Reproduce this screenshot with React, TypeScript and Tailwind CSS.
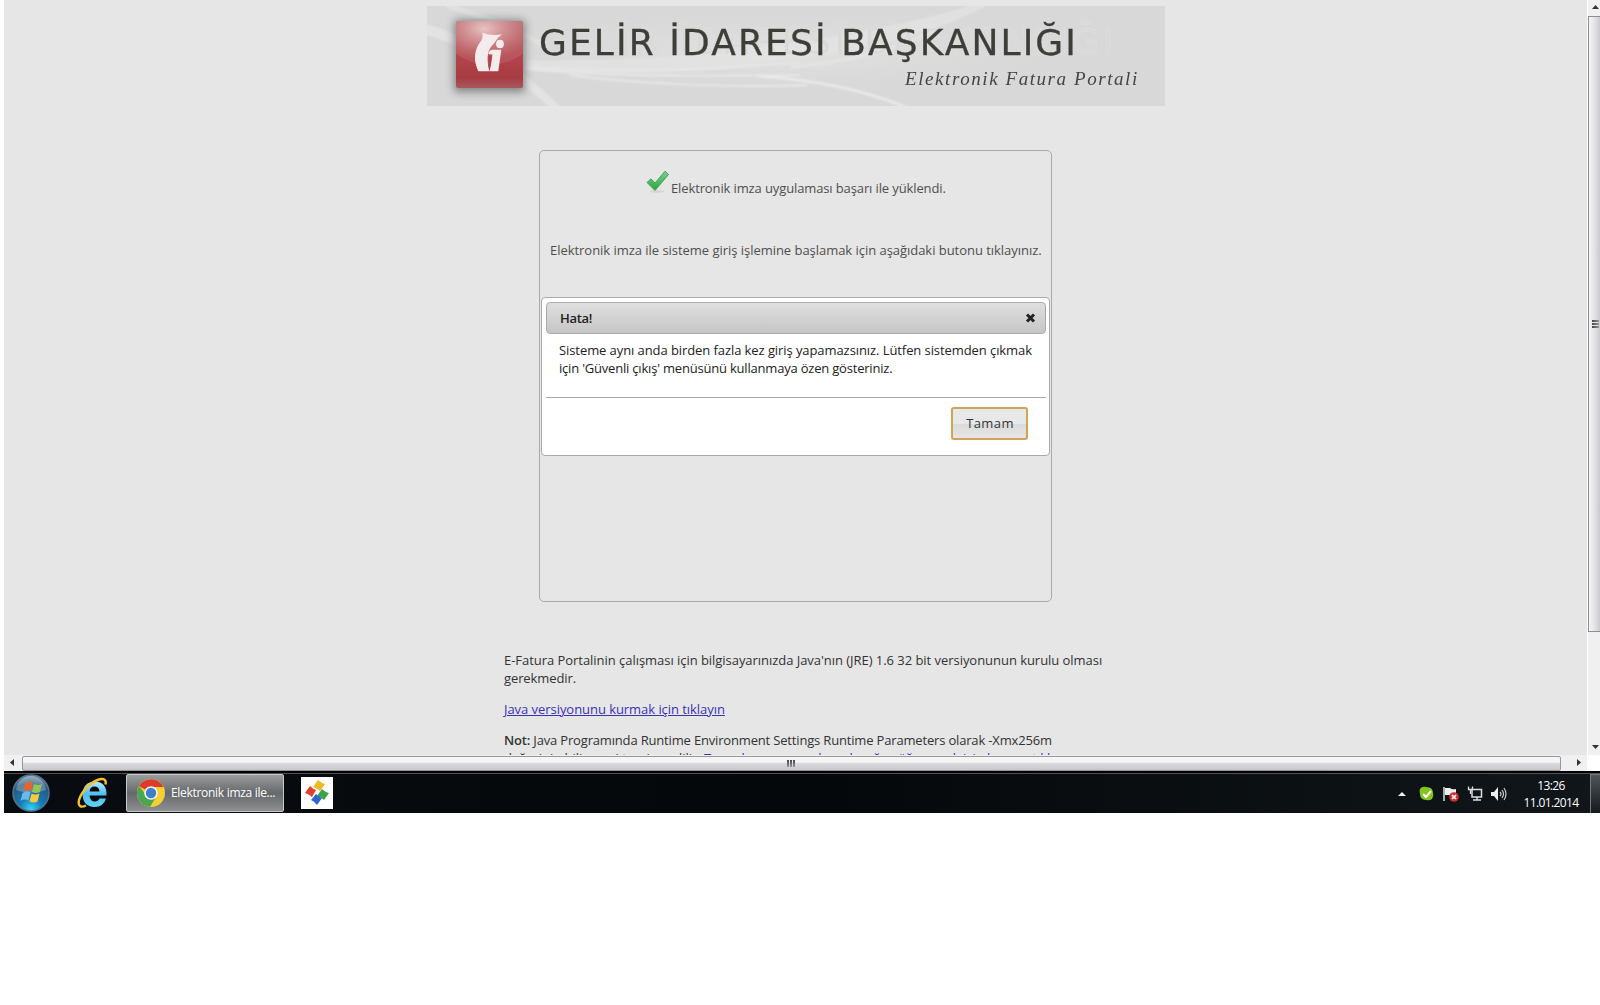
import type { ReactNode } from "react";

const sans = "font-['Open_Sans','Noto_Sans',sans-serif]";

function Banner() {
  return (
    <header className="relative h-[100px] w-[738px] shrink-0 overflow-hidden bg-[#d8d8d8]">
      <svg className="absolute inset-0" width="738" height="100" viewBox="0 0 738 100" fill="none">
        <defs>
          <radialGradient id="glow" cx="0.48" cy="0.45" r="0.5">
            <stop offset="0" stopColor="#e2e2e2" />
            <stop offset="1" stopColor="#d8d8d8" stopOpacity="0" />
          </radialGradient>
          <linearGradient id="red" x1="0" y1="0" x2="0" y2="1">
            <stop offset="0" stopColor="#b5676b" />
            <stop offset="0.55" stopColor="#b2434a" />
            <stop offset="0.85" stopColor="#a83c43" />
            <stop offset="1" stopColor="#a65a5e" />
          </linearGradient>
          <radialGradient id="shine" cx="0.42" cy="0.18" r="0.7">
            <stop offset="0" stopColor="#f2d6d7" stopOpacity="0.85" />
            <stop offset="1" stopColor="#cf8487" stopOpacity="0.25" />
          </radialGradient>
          <filter id="soft" x="-30%" y="-30%" width="160%" height="160%">
            <feGaussianBlur stdDeviation="4" />
          </filter>
          <filter id="wave" x="-5%" y="-20%" width="110%" height="140%">
            <feGaussianBlur stdDeviation="1.1" />
          </filter>
        </defs>
        <rect width="738" height="100" fill="url(#glow)" />
        <g filter="url(#wave)">
          <path d="M-4 17C45 30 95 62 134 101h-12C85 66 40 40-4 28Z" fill="#e3e3e3" />
          <path d="M100 60C220 72 350 62 470 34C510 24 545 8 562-2H548C480 20 300 58 100 54Z" fill="#e4e4e4" opacity="0.7" />
          <path d="M100 61C180 68 270 66 373 56M100 63C190 71 280 70 373 69" stroke="#e8e8e8" strokeWidth="2" />
          <path d="M143 69C200 77 300 82 380 79" stroke="#e8e8e8" strokeWidth="2" />
          <path d="M330 70C390 74 440 85 478 101" stroke="#ebebeb" strokeWidth="2.500" />
          <path d="M363 61C430 55 470 42 510 24" stroke="#e3e3e3" strokeWidth="4" />
          <path d="M20 0C60 12 90 22 120 42" stroke="#e0e0e0" strokeWidth="5" />
        </g>
        <rect x="27" y="14" width="71" height="72" rx="3" fill="#555" opacity="0.65" filter="url(#soft)" />
        <rect x="29" y="15" width="67" height="67" rx="2" fill="url(#red)" />
        <path d="M29 17q0-2 2-2h63q2 0 2 2v31q-34 22-67 0Z" fill="url(#shine)" />
        <path
          d="M55.300 26.700Q65 30 75 28.300Q71 31 68 36Q63 41 61.300 46Q59.500 55 62.300 65.300H51.300Q47.500 57 48 50.500Q48.500 43 52.300 37.300Q57 32 55.300 26.700Z"
          fill="#f4ecec"
        />
        <path d="M61 47.500Q62.500 44 66 43.700H74.300L71.300 65.300H62.500Q64.500 58 65.500 48.500Q63 48.500 61 47.500Z" fill="#f4ecec" />
        <path d="M61.700 49.500H64.800L63 62Q61 55 61.700 49.500Z" fill="#ad4249" />
        <ellipse cx="73" cy="38" rx="3.900" ry="4.300" fill="#f4ecec" />
      </svg>
      <div
        aria-hidden="true"
        className="absolute left-[112px] top-[15px] whitespace-nowrap font-['DejaVu_Sans',sans-serif] text-[36px] leading-[42px] tracking-[3.75px] text-[#d9d9d9] [-webkit-text-stroke:0.6px_#dfdfdf]"
      >
        GELİR İDARESİ BAŞKANLIĞI
      </div>
      <h1 className="absolute left-[112px] top-[16px] whitespace-nowrap font-['DejaVu_Sans',sans-serif] text-[36px] leading-[42px] tracking-[2.1px] text-[#3c3e37] [-webkit-text-stroke:0.3px_#3c3e37]">
        GELİR İDARESİ BAŞKANLIĞI
      </h1>
      <div className="absolute left-[478px] top-[61px] whitespace-nowrap font-['Liberation_Serif',serif] text-[19px] italic leading-6 tracking-[1.57px] text-[#444]">
        Elektronik Fatura Portali
      </div>
    </header>
  );
}

function CheckMark() {
  return (
    <svg className="shrink-0" width="24" height="24" viewBox="0 0 24 24">
      <defs>
        <linearGradient id="green" x1="0" y1="0" x2="0" y2="1">
          <stop offset="0" stopColor="#7fcf8b" />
          <stop offset="1" stopColor="#27a63c" />
        </linearGradient>
      </defs>
      <ellipse cx="11" cy="21.5" rx="7" ry="1.3" fill="#d4d4d4" />
      <path d="M1 12.500 5 8.800l4 4.200L19 1.200l3.500 3.300L9 20.500Z" fill="url(#green)" stroke="#45a556" strokeWidth="1" strokeLinejoin="round" />
    </svg>
  );
}

function ErrorDialog() {
  return (
    <div className="absolute left-px top-[146px] flex h-[159px] w-[509px] flex-col rounded-[4px] border border-[#aaa] bg-white py-1 pl-1 pr-[3px] text-[#222]">
      <div className="flex h-8 shrink-0 items-center justify-between rounded-[4px] border border-[#aaa] bg-linear-to-b from-[#dfdfdf] to-[#c6c6c6] pl-[13px] pr-[9px]">
        <span className="text-[13px] font-semibold tracking-[-0.3px]">Hata!</span>
        <svg width="11" height="10" viewBox="0 0 11 10">
          <path d="M2 1.500 9 8.500M9 1.500 2 8.500" stroke="#222" strokeWidth="3" />
        </svg>
      </div>
      <div className="h-[63px] shrink-0 whitespace-nowrap pl-[13px] pt-[7px] text-[13px] leading-[18px]">
        <p className="tracking-[-0.08px]">Sisteme aynı anda birden fazla kez giriş yapamazsınız. Lütfen sistemden çıkmak</p>
        <p className="tracking-[-0.2px]">için 'Güvenli çıkış' menüsünü kullanmaya özen gösteriniz.</p>
      </div>
      <div className="flex justify-end border-t border-[#aaa] pr-[18px] pt-[9px]">
        <button className="h-[33px] w-[77px] rounded-[3px] border-2 border-[#cda65c] bg-linear-to-b from-[#e8e8e8] from-50% via-[#dadada] via-50% to-[#e6e6e6] pb-px pl-px text-[13px] leading-[18px] tracking-[0.4px] text-[#333] shadow-[0_0_1px_0_#efd69a]">
          Tamam
        </button>
      </div>
    </div>
  );
}

function LoginPanel() {
  return (
    <section className="relative mt-[44px] h-[452px] w-[513px] shrink-0 rounded-[5px] border border-[#aaa] text-[13px] leading-[18px] text-[#4f4f4f]">
      <div className="flex pl-[106px] pt-[19px]">
        <CheckMark />
        <p className="ml-px mt-[9px] whitespace-nowrap tracking-[-0.12px]">Elektronik imza uygulaması başarı ile yüklendi.</p>
      </div>
      <p className="mt-[44px] whitespace-nowrap pl-[10px] tracking-[-0.035px]">
        Elektronik imza ile sisteme giriş işlemine başlamak için aşağıdaki butonu tıklayınız.
      </p>
      <ErrorDialog />
    </section>
  );
}

function Notes() {
  return (
    <div className="mt-[49px] w-[620px] shrink-0 whitespace-nowrap text-[13px] leading-[18px] text-[#333]">
      <p className="tracking-[-0.04px]">E-Fatura Portalinin çalışması için bilgisayarınızda Java'nın (JRE) 1.6 32 bit versiyonunun kurulu olması</p>
      <p className="tracking-[-0.1px]">gerekmedir.</p>
      <p className="mt-[13px] tracking-[-0.05px] text-[#3a32b4] underline">Java versiyonunu kurmak için tıklayın</p>
      <p className="mt-[13px] tracking-[-0.17px]">
        <span className="font-semibold">Not:</span> Java Programında Runtime Environment Settings Runtime Parameters olarak -Xmx256m
      </p>
      <p className="tracking-[-0.03px]">
        değerinin bilinmesi tavsiye edilir. <span className="text-[#3a32b4] underline">Tanımlamanın nasıl yapılacağını öğrenmek için buraya tıkla</span>
      </p>
    </div>
  );
}

function Arrow({ d }: { d: string }) {
  return (
    <svg width="8" height="8" viewBox="0 0 8 8" fill="#333">
      <path d={d} />
    </svg>
  );
}

function VerticalScroll() {
  return (
    <div className="flex h-[755px] w-[13px] shrink-0 flex-col border-l border-white bg-[#f0f0f0]">
      <div className="flex h-4 shrink-0 items-center pl-1">
        <Arrow d="M0 5h7L3.500 1Z" />
      </div>
      <div className="flex h-[616px] shrink-0 items-center border-y border-l border-[#8f8f8f] bg-linear-to-r from-[#f4f4f4] via-[#e3e3e6] to-[#c9c9ce] pl-[3px]">
        <div className="flex w-[7px] flex-col gap-[1px]">
          <div className="h-[2px] bg-linear-to-r from-[#444] to-[#999]" />
          <div className="h-[2px] bg-linear-to-r from-[#444] to-[#999]" />
          <div className="h-[2px] bg-linear-to-r from-[#444] to-[#999]" />
        </div>
      </div>
      <div className="flex grow items-end pb-1 pl-1">
        <Arrow d="M0 2h7L3.500 6Z" />
      </div>
    </div>
  );
}

function HorizontalScroll() {
  return (
    <div className="flex h-4 w-[1583px] items-center bg-[#f0f0f0]">
      <div className="flex w-[18px] shrink-0 justify-center pr-[2px]">
        <Arrow d="M6 0v7L2 3.500Z" />
      </div>
      <div className="flex h-[15px] w-[1539px] shrink-0 items-center justify-center rounded-[2px] border border-[#979797] bg-linear-to-b from-[#f5f5f5] from-40% via-[#d9dadd] via-50% to-[#c8c8cc] pr-[2px]">
        <div className="flex gap-[1px]">
          <div className="h-[7px] w-[2px] bg-linear-to-b from-[#444] to-[#999]" />
          <div className="h-[7px] w-[2px] bg-linear-to-b from-[#444] to-[#999]" />
          <div className="h-[7px] w-[2px] bg-linear-to-b from-[#444] to-[#999]" />
        </div>
      </div>
      <div className="flex grow justify-center pl-[9px]">
        <Arrow d="M2 0v7l4-3.500Z" />
      </div>
    </div>
  );
}

function StartOrb() {
  return (
    <svg className="mb-px" width="38" height="38" viewBox="0 0 38 38">
      <defs>
        <radialGradient id="orb" cx="0.5" cy="0.95" r="0.95">
          <stop offset="0" stopColor="#35d5f5" />
          <stop offset="0.35" stopColor="#1779b5" />
          <stop offset="0.75" stopColor="#245a80" />
          <stop offset="1" stopColor="#7e9db1" />
        </radialGradient>
      </defs>
      <circle cx="19" cy="19" r="18" fill="url(#orb)" stroke="#56728a" strokeWidth="1.500" />
      <path d="M4 16C6 6 13 2 19 2s13 4 15 14q-15 5-30 0Z" fill="#fff" opacity="0.25" />
      <path d="M13 9.500q4-3 8-.5l-2 8q-4-2-8 .5Z" fill="#e8642c" />
      <path d="M22 10q4 2 8 0l-2 8q-4 2-8 0Z" fill="#96c455" />
      <path d="M10.500 19q4-3 8-.5l-2 8q-4-2-8 .5Z" fill="#6cb7ea" />
      <path d="M19.500 19.500q4 2 8 0l-2 8q-4 2-8 0Z" fill="#fbc93c" />
    </svg>
  );
}

function ExplorerIcon() {
  return (
    <svg width="32" height="32" viewBox="0 0 32 32" fill="none">
      <defs>
        <linearGradient id="ie" x1="0" y1="0" x2="0" y2="1">
          <stop offset="0" stopColor="#b4ebfb" />
          <stop offset="0.5" stopColor="#4fbcee" />
          <stop offset="1" stopColor="#62d5fa" />
        </linearGradient>
      </defs>
      <path
        d="M29.500 18.500H12.500Q13 24.500 18 24.500Q21 24.500 22.500 21.500H29Q26.500 30 17.500 30Q6 29.500 5.500 17.500Q6 5 18 4.500Q30 5 29.500 18.500ZM12.500 14.500H22.500Q22 9.500 17.500 9.500Q13 9.500 12.500 14.500Z"
        fill="url(#ie)"
      />
      <path d="M28.500 7.500C30 1 24 0 15 6 5 13-1 25 3 29q2 1.500 6-.5" stroke="#f5c22b" strokeWidth="2.400" />
    </svg>
  );
}

function ChromeIcon() {
  return (
    <svg className="mb-px" width="28" height="28" viewBox="0 0 28 28">
      <circle cx="14" cy="14" r="14" fill="#f6cf32" />
      <path d="M14 14 1.900 7A14 14 0 0 1 26.500 8H14Z" fill="#d93c2d" />
      <path d="M1.900 7A14 14 0 0 0 13 28l6-10-5-4-5 2Z" fill="#4aa653" />
      <circle cx="14" cy="14" r="6.800" fill="#f4f4f4" />
      <circle cx="14" cy="14" r="5.200" fill="#3f7fc9" />
    </svg>
  );
}

function ColorTiles() {
  return (
    <div className="mb-px flex size-8 items-center justify-center bg-white">
      <svg width="26" height="26" viewBox="0 0 26 26">
        <path d="M14 0q3 3 7 4l-5 7q-3-3-7-4Z" fill="#efb91f" />
        <path d="M6 6q3 3 6 4l-4 7q-3-3-7-4Z" fill="#e0402d" />
        <path d="M18 9q3 3 7 4l-5 7q-3-3-7-4Z" fill="#3da345" />
        <path d="M12 14q3 3 6 4l-5 7q-3-4-6-5Z" fill="#2e66cf" />
      </svg>
    </div>
  );
}

function TrayIcons() {
  return (
    <svg width="112" height="20" viewBox="0 0 112 20" fill="none">
      <path d="M0 12h8l-4-4Z" fill="#eee" />
      <path d="M22 5q2-3 6-2 7 0 7 6 1 3-1 6-3 2-5 1-7 0-7-6-1-3 0-5Z" fill="#82c61b" />
      <path d="m25 10 3 3 5-6" stroke="#fff" strokeWidth="2" />
      <path d="M46 3v14" stroke="#ddd" strokeWidth="1.500" />
      <path d="M47 4h5q2 2 6 1v7q-4 1-6-1h-5Z" fill="#eee" />
      <circle cx="56" cy="13" r="4.800" fill="#cf2d28" />
      <path d="m54 11 4 4m0-4-4 4" stroke="#fff" strokeWidth="1.700" />
      <path d="M74 5.500h9.500V13H74ZM79 13v3m-4 0h8" stroke="#ddd" strokeWidth="1.500" />
      <path d="M70.500 2.500v3h4v-3M72.500 6v4" stroke="#ddd" strokeWidth="1.300" />
      <path d="M93 8h3l4-5v14l-4-5h-3Z" fill="#eee" />
      <path d="M102 8q2 2 0 4m2-6q3 4 0 8m2-10q4 6 0 12" stroke="#ccc" strokeWidth="1.200" />
    </svg>
  );
}

function TaskButton({ children }: { children: ReactNode }) {
  return (
    <div className="mb-px ml-[17px] flex h-[38px] w-[158px] items-center gap-[6px] rounded-[2px] border border-[#c6c9cb] bg-linear-to-b from-[#9b9d9e] via-[#66696b] to-[#8d8f90] pl-[10px]">
      {children}
    </div>
  );
}

function Taskbar() {
  return (
    <footer className="ml-1 flex h-10 items-center overflow-hidden border-t border-[#4f5457] bg-linear-to-r from-[#080c10] via-[#05080a] to-[#11161a] pl-2 text-[12px] text-white">
      <StartOrb />
      <div className="mb-px ml-[27px]">
        <ExplorerIcon />
      </div>
      <TaskButton>
        <ChromeIcon />
        <span className="whitespace-nowrap tracking-[-0.3px]">Elektronik imza ile...</span>
      </TaskButton>
      <div className="ml-[17px]">
        <ColorTiles />
      </div>
      <div className="ml-auto">
        <TrayIcons />
      </div>
      <div className="ml-[7px] mt-px w-[68px] text-center leading-[17px] tracking-[-0.6px]">
        <div>13:26</div>
        <div>11.01.2014</div>
      </div>
      <div className="ml-[5px] h-10 w-[10px] border-l border-t border-[#777] bg-linear-to-b from-[#50565a] to-[#14181b]" />
    </footer>
  );
}

export default function App() {
  return (
    <div className={`h-[1005px] w-[1600px] overflow-hidden bg-white ${sans}`}>
      <div className="flex h-[755px] pl-1">
        <main className="flex h-[755px] w-[1583px] shrink-0 flex-col overflow-hidden bg-[#e6e6e6] pt-[6px]">
          <div className="ml-[423px] flex w-[738px] flex-col">
            <Banner />
            <div className="ml-[112px]">
              <LoginPanel />
            </div>
            <div className="ml-[77px]">
              <Notes />
            </div>
          </div>
        </main>
        <VerticalScroll />
      </div>
      <div className="pl-1">
        <HorizontalScroll />
      </div>
      <div className="ml-1 h-[2px] bg-black" />
      <Taskbar />
    </div>
  );
}
